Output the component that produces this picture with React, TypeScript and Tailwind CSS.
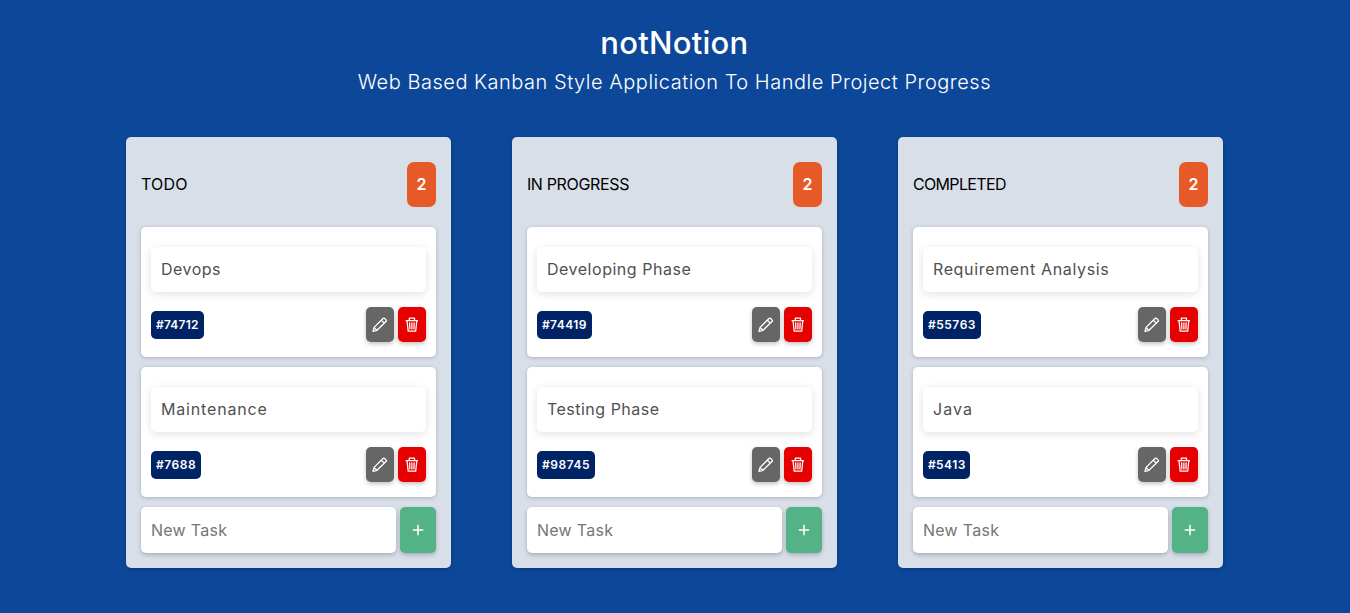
type Task = { title: string; id: string; titleClass: string; idClass: string };
type Column = { name: string; nameClass: string; tasks: Task[] };

const columns: Column[] = [
  {
    name: "TODO",
    nameClass: "tracking-[0.2px]",
    tasks: [
      { title: "Devops", id: "#74712", titleClass: "tracking-[0.5px]", idClass: "w-[53px] tracking-[0.25px]" },
      { title: "Maintenance", id: "#7688", titleClass: "tracking-[0.85px]", idClass: "w-[50px] tracking-[0.55px]" },
    ],
  },
  {
    name: "IN PROGRESS",
    nameClass: "tracking-[-0.34px]",
    tasks: [
      { title: "Developing Phase", id: "#74419", titleClass: "tracking-[0.53px]", idClass: "w-[55px] tracking-[0.45px]" },
      { title: "Testing Phase", id: "#98745", titleClass: "tracking-[0.5px]", idClass: "w-[58px] tracking-[0.55px]" },
    ],
  },
  {
    name: "COMPLETED",
    nameClass: "tracking-[-0.65px]",
    tasks: [
      { title: "Requirement Analysis", id: "#55763", titleClass: "tracking-[0.66px]", idClass: "w-[58px] tracking-[0.55px]" },
      { title: "Java", id: "#5413", titleClass: "tracking-[1.1px]", idClass: "w-[47px] tracking-[0.45px]" },
    ],
  },
];

function PencilIcon() {
  return (
    <svg className="h-4 w-4" viewBox="0 0 16 16" fill="none" stroke="currentColor" strokeWidth="1.3" strokeLinejoin="round" strokeLinecap="round">
      <path d="M1 14.3 2.1 10.4 11.2 1.3Q11.8.8 12.4 1.3L14.2 3.1Q14.7 3.7 14.2 4.3L5 13.3ZM9.4 3.2 12.3 6.1M2.1 10.6 4.8 13.2" />
    </svg>
  );
}

function TrashIcon() {
  return (
    <svg className="h-4 w-4" viewBox="0 0 16 16" fill="none" stroke="currentColor" strokeWidth="1.25" strokeLinejoin="round">
      <path d="M1.6 3.5H14M5.3 3.3V1.2H10.5V3.3M3 3.7 4.2 14.2H11.7L12.8 3.7M5.6 5.4 5.9 12.4M7.9 5.4V12.4M10.2 5.4 9.9 12.4" />
    </svg>
  );
}

function PlusIcon() {
  return (
    <svg className="h-3 w-3" viewBox="0 0 12 12" fill="none" stroke="currentColor" strokeWidth="1.5">
      <path d="M.8 6H11.2M6 .8V11.2" />
    </svg>
  );
}

function TaskCard({ task }: { task: Task }) {
  return (
    <li className="flex h-[130px] flex-col rounded-[5px] bg-white px-2.5 pt-5 shadow-[0_1px_4px_rgba(0,0,0,0.2)]">
      <p className={`flex h-[45px] items-center rounded-[5px] px-2.5 pb-0.5 text-[16px] whitespace-nowrap text-[#505050] shadow-[0_2px_8px_rgba(0,0,0,0.12)] ${task.titleClass}`}>
        {task.title}
      </p>
      <div className="mt-[15px] flex h-[35px] items-center justify-between">
        <span className={`flex h-7 items-center rounded-[5px] bg-[#002366] pl-[5px] text-[12px] font-semibold text-white ${task.idClass}`}>
          {task.id}
        </span>
        <div className="flex gap-1">
          <button aria-label="Edit" className="flex h-[35px] w-7 items-center justify-center rounded-[5px] bg-[#666] text-white shadow-[0_2px_4px_rgba(0,0,0,0.24)]">
            <PencilIcon />
          </button>
          <button aria-label="Delete" className="flex h-[35px] w-7 items-center justify-center rounded-[5px] bg-[#e60000] text-white shadow-[0_2px_4px_rgba(0,0,0,0.24)]">
            <TrashIcon />
          </button>
        </div>
      </div>
    </li>
  );
}

function Board({ column }: { column: Column }) {
  return (
    <section className="flex w-[325px] flex-col rounded-[5px] bg-[#d8dfe8] px-[15px] pt-[25px] pb-[15px] shadow-[0_1px_4px_rgba(0,0,0,0.2)]">
      <header className="flex h-[45px] items-center justify-between">
        <h2 className={`pb-0.5 text-[16px] text-black ${column.nameClass}`}>{column.name}</h2>
        <span className="flex h-[45px] w-[29px] items-center justify-center rounded-[7px] bg-[#e55a26] pb-0.5 text-[16px] font-semibold text-white">
          {column.tasks.length}
        </span>
      </header>
      <ul className="mt-5 flex flex-col gap-2.5">
        {column.tasks.map((task) => (
          <TaskCard key={task.id} task={task} />
        ))}
      </ul>
      <form className="mt-2.5 flex gap-1">
        <input
          placeholder="New Task"
          className="h-[46px] w-[255px] rounded-[5px] bg-white px-2.5 text-[16px] tracking-[0.3px] shadow-[0_2px_4px_rgba(0,0,0,0.22)] placeholder:text-[#757575]"
        />
        <button type="button" aria-label="Add task" className="flex h-[46px] w-9 items-center justify-center rounded-[5px] bg-[#53b386] text-white shadow-[0_2px_4px_rgba(0,0,0,0.22)]">
          <PlusIcon />
        </button>
      </form>
    </section>
  );
}

export default function App() {
  return (
    <main className="min-h-screen bg-[#0d4799] pt-[19px] pr-[1.2px] font-['Inter',sans-serif]">
      <header className="flex flex-col items-center text-white">
        <h1 className="text-[31px] leading-[48px] font-medium tracking-[0.25px]">notNotion</h1>
        <p className="text-[20px] leading-[30px] font-light tracking-[0.52px]">
          Web Based Kanban Style Application To Handle Project Progress
        </p>
      </header>
      <div className="mt-10 flex justify-center gap-[61px]">
        {columns.map((column) => (
          <Board key={column.name} column={column} />
        ))}
      </div>
    </main>
  );
}
